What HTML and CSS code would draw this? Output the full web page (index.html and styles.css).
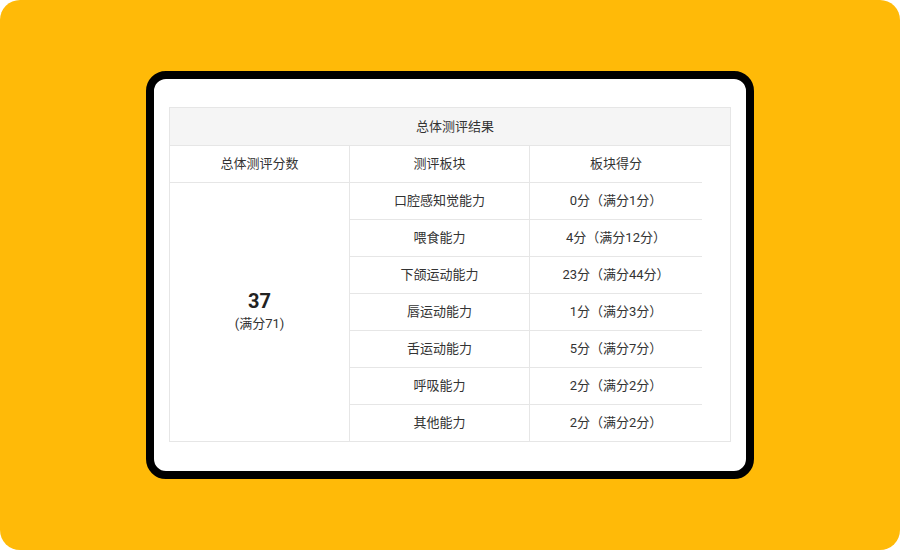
FILE: index.html
```html
<!DOCTYPE html>
<html lang="zh">
<head>
<meta charset="utf-8">
<link rel="stylesheet" href="styles.css">
</head>
<body>
<div class="stage">
  <div class="device">
    <div class="panel">
      <div class="title">总体测评结果</div>
      <div class="grid">
        <div class="cell">总体测评分数</div>
        <div class="cell">测评板块</div>
        <div class="cell last">板块得分</div>
        <div class="cell total"><div class="score">37</div><div class="full">(满分71)</div></div>
        <div class="cell">口腔感知觉能力</div><div class="cell last">0分（满分1分）</div>
        <div class="cell">喂食能力</div><div class="cell last">4分（满分12分）</div>
        <div class="cell">下颌运动能力</div><div class="cell last">23分（满分44分）</div>
        <div class="cell">唇运动能力</div><div class="cell last">1分（满分3分）</div>
        <div class="cell">舌运动能力</div><div class="cell last">5分（满分7分）</div>
        <div class="cell">呼吸能力</div><div class="cell last">2分（满分2分）</div>
        <div class="cell end">其他能力</div><div class="cell last end">2分（满分2分）</div>
      </div>
    </div>
  </div>
</div>
</body>
</html>
```
FILE: styles.css
```css
html, body { margin: 0; padding: 0; background: #fff; }
body { font-family: "Roboto", "Noto Sans CJK SC", sans-serif; }
.stage {
  width: 900px; height: 550px;
  background: #FFBA08;
  border-radius: 20px;
  display: flex; align-items: center; justify-content: center;
}
.device {
  width: 592px; height: 392px;
  border: 8px solid #000;
  border-radius: 20px;
  background: #fff;
  overflow: hidden;
}
.panel {
  margin: 28px 0 0 15px;
  border: 1px solid #e6e6e6;
  width: 562px;
  height: 335px;
  box-sizing: border-box;
}
.title {
  height: 38px;
  box-sizing: border-box;
  background: #f5f5f5;
  border-bottom: 1px solid #e6e6e6;
  display: flex; align-items: center; justify-content: center;
  padding: 0 0 3px 10px;
  font-size: 13px; color: #333;
}
.grid {
  display: grid;
  grid-template-columns: 180px 180px 172px;
  grid-auto-rows: 37px;
}
.cell {
  box-sizing: border-box;
  display: flex; flex-direction: column; align-items: center; justify-content: center;
  padding-bottom: 3px;
  font-size: 13px;
  color: #333;
  border-right: 1px solid #e6e6e6;
  border-bottom: 1px solid #e6e6e6;
}
.cell.last { border-right: none; }
.cell.end { border-bottom: none; height: 36px; }
.cell.total { grid-row: span 7; border-bottom: none; height: 258px; }
.score { font-size: 20px; font-weight: bold; color: #222; line-height: 24px; }
.full { font-size: 13px; color: #333; line-height: 18px; margin-top: 2px; }
```
